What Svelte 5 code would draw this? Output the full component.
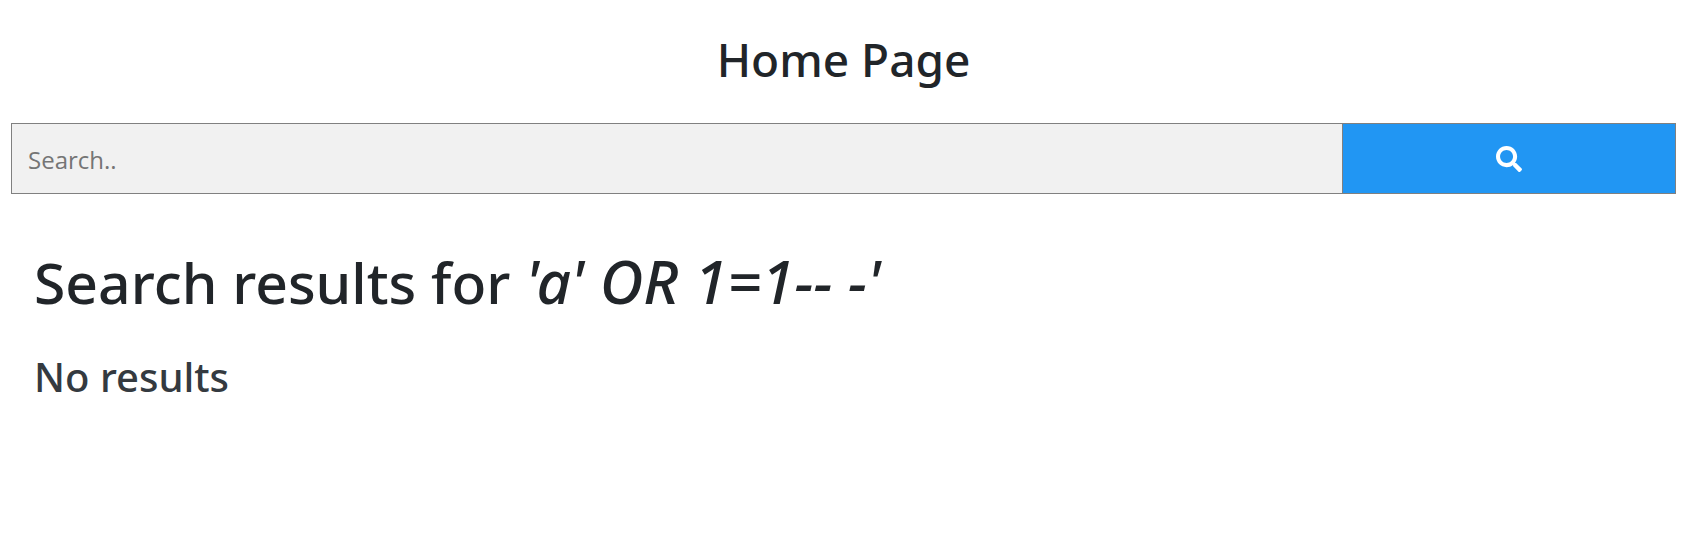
<script>
  let query = $state('');
</script>

<main>
  <h2>Home Page</h2>
  <form role="search" onsubmit={(event) => event.preventDefault()}>
    <input type="text" name="search" placeholder="Search.." aria-label="Search" bind:value={query} />
    <button type="submit" aria-label="Search">
      <svg viewBox="0 0 512 512" aria-hidden="true">
        <path d="M505 442.7L405.3 343c-4.500-4.500-10.600-7-17-7H372c27.600-35.300 44-79.700 44-128C416 93.100 322.900 0 208 0S0 93.100 0 208s93.100 208 208 208c48.300 0 92.700-16.400 128-44v16.300c0 6.400 2.500 12.500 7 17l99.700 99.700c9.400 9.400 24.600 9.400 33.900 0l28.300-28.300c9.400-9.400 9.400-24.600.1-34zM208 336c-70.700 0-128-57.200-128-128 0-70.700 57.200-128 128-128 70.700 0 128 57.200 128 128 0 70.700-57.200 128-128 128z" />
      </svg>
    </button>
  </form>
  <section>
    <h1>Search results for <em>'a' OR 1=1-- -'</em></h1>
    <p>No results</p>
  </section>
</main>

<style>
  :global(body) {
    background: #fff;
    color: #212529;
    font-family: "Segoe UI", "Noto Sans", "Open Sans", sans-serif;
  }

  main {
    padding: 31px 5px 0 11px;
  }

  h2 {
    margin: 0 0 36px;
    font-size: 46px;
    font-weight: 500;
    line-height: 56px;
    text-align: center;
  }

  form {
    display: flex;
  }

  input,
  button {
    box-sizing: border-box;
    height: 71px;
    margin: 0;
    border: 1px solid #808080;
    border-radius: 0;
  }

  input {
    width: 80%;
    padding: 2px 16px 0;
    background: #f1f1f1;
    color: #212529;
    font: 24px "Segoe UI", "Open Sans", "Noto Sans", sans-serif;
  }

  input::placeholder {
    color: #757575;
    opacity: 1;
  }

  button {
    display: flex;
    width: 20%;
    align-items: center;
    justify-content: center;
    border-left: 0;
    background: #2196f3;
    color: #fff;
    cursor: pointer;
  }

  svg {
    width: 26px;
    height: 26px;
    fill: currentColor;
  }

  section {
    padding: 51px 23px 0;
  }

  h1 {
    margin: 0;
    font-size: 57px;
    font-weight: 500;
    line-height: 72px;
  }

  em {
    font-size: 60px;
  }

  p {
    margin: 33px 0 0;
    color: #343a40;
    font-size: 40px;
    font-weight: 500;
    line-height: 52px;
  }
</style>
